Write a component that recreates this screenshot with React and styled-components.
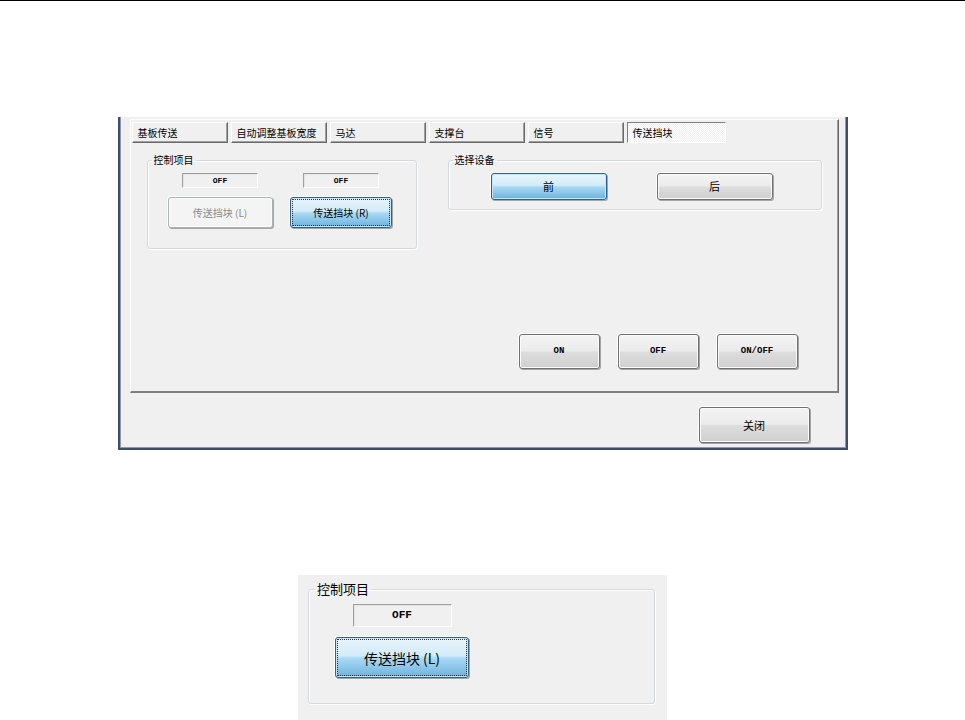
import React from "react";
import styled, { createGlobalStyle, css } from "styled-components";

const GlobalStyle = createGlobalStyle`
  html, body {
    margin: 0;
    padding: 0;
    background: #ffffff;
    overflow: hidden;
  }
  body {
    font-family: "Noto Sans CJK SC", "Liberation Sans", sans-serif;
    color: #000;
  }
  * { box-sizing: border-box; }
`;

const Page = styled.div`
  width: 965px;
  height: 720px;
  display: flex;
  flex-direction: column;
  align-items: center;
`;

const TopRule = styled.div`
  align-self: stretch;
  height: 1px;
  background: #000;
`;

const Dialog = styled.div`
  margin-top: 116px;
  width: 730px;
  background: #f0f0f0;
  border: 2px solid #3e4d69;
  border-top: none;
  box-shadow: inset 1px 0 0 #8c98ad, inset -1px 0 0 #8c98ad, inset 0 -1px 0 #8c98ad;
  padding: 2px 7px 5px 10px;
  display: flex;
  flex-direction: column;
`;

const TabControl = styled.div`
  height: 274px;
  display: flex;
  flex-direction: column;
  border-top: 1px solid #ffffff;
  border-left: 1px solid #ffffff;
  border-right: 1px solid #696969;
  border-bottom: 2px solid #808080;
  box-shadow: inset -1px 0 0 #a0a0a0;
`;

const TabRow = styled.div`
  display: flex;
  gap: 3px;
  padding: 2px 0 0 1px;
`;

const Tab = styled.div`
  flex: none;
  width: 96px;
  height: 21px;
  display: flex;
  align-items: center;
  padding-left: 5px;
  font-size: 10px;
  line-height: 12px;
  white-space: nowrap;
  background: #f0f0f0;
  border-top: 1px solid #ffffff;
  border-left: 1px solid #ffffff;
  border-right: 1px solid #696969;
  border-bottom: 1px solid #696969;
  box-shadow: inset -1px -1px 0 #a0a0a0;
  ${(p) =>
    p.$active &&
    css`
      width: 99px;
      border-top: 1px solid #808080;
      border-left: 1px solid #808080;
      border-right: 1px solid #ffffff;
      border-bottom: 1px solid #ffffff;
      box-shadow: none;
      background-color: #f0f0f0;
      background-image: conic-gradient(
        #ffffff 90deg,
        #f0f0f0 90deg 180deg,
        #ffffff 180deg 270deg,
        #f0f0f0 270deg
      );
      background-size: 2px 2px;
    `}
`;

const PanelBody = styled.div`
  flex: 1;
  display: flex;
  flex-direction: column;
  padding: 11px 0 22px 16px;
`;

const GroupRow = styled.div`
  display: flex;
  align-items: flex-start;
  gap: 31px;
`;

const Group = styled.fieldset`
  flex: none;
  margin: 0;
  padding: 0;
  width: ${(p) => p.$w}px;
  border: 1px solid #d5d9dd;
  border-radius: 3px;
  box-shadow: 1px 1px 0 #ffffff, inset 1px 1px 0 #ffffff;
  min-width: 0;
`;

const Legend = styled.legend`
  margin-left: ${(p) => (p.$big ? 6 : 4)}px;
  padding: 0 2px;
  font-size: ${(p) => (p.$big ? 13 : 10)}px;
  line-height: ${(p) => (p.$big ? 16 : 12)}px;
`;

const ControlGrid = styled.div`
  display: grid;
  grid-template-columns: repeat(2, 121px);
  grid-auto-flow: column;
  grid-template-rows: auto auto;
  justify-items: center;
  row-gap: 9px;
  padding: 7px 0 20px 12px;
`;

const DeviceRow = styled.div`
  display: flex;
  gap: 50px;
  padding: 7px 0 9px 42px;
`;

const StatusLabel = styled.div`
  width: ${(p) => (p.$big ? 99 : 76)}px;
  height: ${(p) => (p.$big ? 23 : 15)}px;
  display: flex;
  align-items: center;
  justify-content: center;
  font-family: "Liberation Mono", "DejaVu Sans Mono", monospace;
  font-weight: bold;
  font-size: ${(p) => (p.$big ? 11 : 8)}px;
  line-height: 1;
  background: #f0f0f0;
  border: 1px solid;
  border-color: #a0a0a0 #ffffff #ffffff #a0a0a0;
  box-shadow: inset 1px 1px 0 #e3e3e3;
`;

const Button = styled.button`
  flex: none;
  width: ${(p) => p.$w}px;
  height: ${(p) => p.$h}px;
  margin: 0;
  padding: 0;
  font-family: ${(p) =>
    p.$mono
      ? `"Liberation Mono", "DejaVu Sans Mono", monospace`
      : `"Noto Sans CJK SC", "Liberation Sans", sans-serif`};
  font-weight: ${(p) => (p.$mono ? "bold" : "normal")};
  font-size: ${(p) => p.$fs || 10}px;
  line-height: 1;
  color: #000;
  border: 1px solid #707070;
  border-radius: 3px;
  background: linear-gradient(
    to bottom,
    #f4f4f4 0%,
    #ebebeb 48%,
    #dddddd 52%,
    #cfcfcf 100%
  );
  box-shadow: inset 0 0 0 1px #fbfbfb, 1px 1px 0 #a5a5a5, -1px -1px 0 #ffffff;
  ${(p) =>
    p.$variant === "blue" &&
    css`
      border-color: #2c628b;
      background: linear-gradient(
        to bottom,
        #e8f5fc 0%,
        #d3ecf9 45%,
        #a9d9f4 52%,
        #6cb2de 100%
      );
      box-shadow: inset 0 0 0 1px #c7e6f6, 1px 1px 0 #a5a5a5, -1px -1px 0 #ffffff;
    `}
  ${(p) =>
    p.$variant === "disabled" &&
    css`
      color: #8a8a8a;
      border-color: #adb2b5;
      background: #f4f4f4;
    `}
  ${(p) =>
    p.$focus &&
    css`
      outline: 1px dotted #3a2a2a;
      outline-offset: -3px;
    `}
`;

const BottomRow = styled.div`
  margin-top: auto;
  display: flex;
  justify-content: flex-end;
  gap: 18px;
  padding-right: 40px;
`;

const Footer = styled.div`
  display: flex;
  justify-content: flex-end;
  padding: 14px 29px 0 0;
`;

const BigPanel = styled.div`
  margin-top: 125px;
  width: 369px;
  height: 145px;
  background: #f0f0f0;
  padding: 6px 0 0 10px;
`;

const BigColumn = styled.div`
  width: 150px;
  margin-left: 18px;
  display: flex;
  flex-direction: column;
  align-items: center;
  gap: 10px;
  padding: 7px 0 25px 0;
`;

export default function App() {
  const tabs = ["基板传送", "自动调整基板宽度", "马达", "支撑台", "信号", "传送挡块"];
  return (
    <>
      <GlobalStyle />
      <Page>
        <TopRule />
        <Dialog>
          <TabControl>
            <TabRow>
              {tabs.map((t, i) => (
                <Tab key={t} $active={i === tabs.length - 1}>
                  {t}
                </Tab>
              ))}
            </TabRow>
            <PanelBody>
              <GroupRow>
                <Group $w={270}>
                  <Legend>控制项目</Legend>
                  <ControlGrid>
                    <StatusLabel>OFF</StatusLabel>
                    <Button $w={105} $h={31} $variant="disabled">
                      传送挡块 (L)
                    </Button>
                    <StatusLabel>OFF</StatusLabel>
                    <Button $w={102} $h={31} $variant="blue" $focus>
                      传送挡块 (R)
                    </Button>
                  </ControlGrid>
                </Group>
                <Group $w={374}>
                  <Legend>选择设备</Legend>
                  <DeviceRow>
                    <Button $w={116} $h={27} $variant="blue" $fs={11}>
                      前
                    </Button>
                    <Button $w={116} $h={27} $fs={11}>
                      后
                    </Button>
                  </DeviceRow>
                </Group>
              </GroupRow>
              <BottomRow>
                <Button $w={81} $h={35} $mono $fs={9}>
                  ON
                </Button>
                <Button $w={81} $h={35} $mono $fs={9}>
                  OFF
                </Button>
                <Button $w={81} $h={35} $mono $fs={9}>
                  ON/OFF
                </Button>
              </BottomRow>
            </PanelBody>
          </TabControl>
          <Footer>
            <Button $w={111} $h={36} $fs={11}>
              关闭
            </Button>
          </Footer>
        </Dialog>
        <BigPanel>
          <Group $w={347}>
            <Legend $big>控制项目</Legend>
            <BigColumn>
              <StatusLabel $big>OFF</StatusLabel>
              <Button $w={134} $h={41} $variant="blue" $focus $fs={14}>
                传送挡块 (L)
              </Button>
            </BigColumn>
          </Group>
        </BigPanel>
      </Page>
    </>
  );
}
